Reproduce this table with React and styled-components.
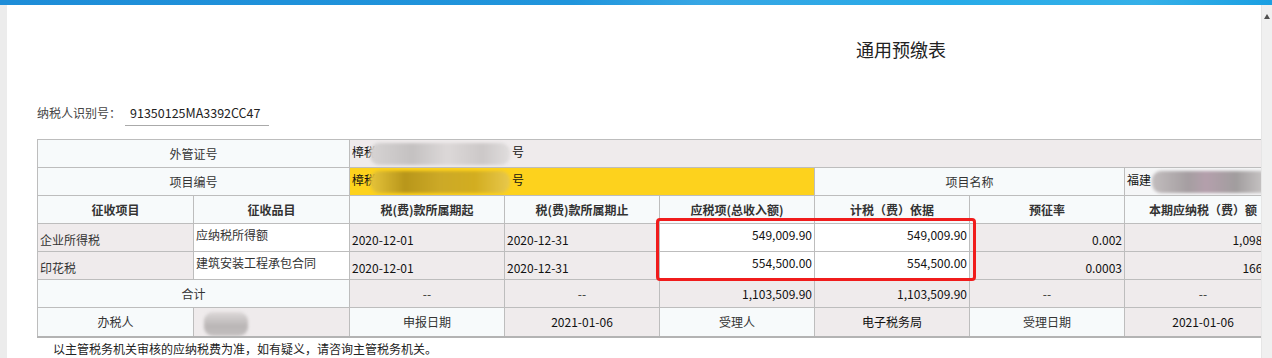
import React from "react";
import styled, { createGlobalStyle } from "styled-components";

const Global = createGlobalStyle`
  html, body {
    margin: 0;
    padding: 0;
    background: #fff;
  }
  body {
    font-family: "Noto Sans CJK SC", "Microsoft YaHei", sans-serif;
    font-size: 12px;
    color: #333;
  }
`;

const bgs = {
  label: "#f7fafb",
  value: "#efebec",
  white: "#ffffff",
  yellow: "#fdd21d",
  light: "#f5f6f7",
};

const rows = [
  ["企业所得税", "应纳税所得额", "2020-12-01", "2020-12-31", "549,009.90", "549,009.90", "0.002", "1,098.02"],
  ["印花税", "建筑安装工程承包合同", "2020-12-01", "2020-12-31", "554,500.00", "554,500.00", "0.0003", "166.35"],
];

const heads = [
  "征收项目",
  "征收品目",
  "税(费)款所属期起",
  "税(费)款所属期止",
  "应税项(总收入额)",
  "计税（费）依据",
  "预征率",
  "本期应纳税（费）额",
];

const App = () => {
  return (
    <Page>
      <Global />
      <TopBar />
      <Body>
        <LeftStrip />
        <Main>
          <Title>通用预缴表</Title>
          <IdRow>
            <span>纳税人识别号：</span>
            <IdValue>91350125MA3392CC47</IdValue>
          </IdRow>
          <TableWrap>
            <Table>
              <colgroup>
                <col style={{ width: 156 }} />
                <col style={{ width: 156 }} />
                <col style={{ width: 155 }} />
                <col style={{ width: 155 }} />
                <col style={{ width: 155 }} />
                <col style={{ width: 155 }} />
                <col style={{ width: 155 }} />
                <col style={{ width: 157 }} />
              </colgroup>
              <tbody>
                <tr>
                  <Cell colSpan={2} $bg="label" $align="center">外管证号</Cell>
                  <Cell colSpan={6} $bg="value" $dark>
                    樟税<Blur $w={140} $tone="gray" $shift={-6} />号
                  </Cell>
                </tr>
                <tr>
                  <Cell colSpan={2} $bg="label" $align="center">项目编号</Cell>
                  <Cell colSpan={3} $bg="yellow" $dark>
                    樟税<Blur $w={140} $tone="yellow" $shift={-6} />号
                  </Cell>
                  <Cell colSpan={2} $bg="label" $align="center">项目名称</Cell>
                  <Cell $bg="light" $dark>
                    福建<Blur $w={120} $tone="pink" $shift={1} />
                  </Cell>
                </tr>
                <tr>
                  {heads.map((h) => (
                    <Cell key={h} $bg="label" $align="center" $bold>
                      {h}
                    </Cell>
                  ))}
                </tr>
                {rows.map((r) => (
                  <tr key={r[0]}>
                    <Cell $bg="value" $low>{r[0]}</Cell>
                    <Cell $bg="white" $high>{r[1]}</Cell>
                    <Cell $bg="value" $low $dark>{r[2]}</Cell>
                    <Cell $bg="value" $low $dark>{r[3]}</Cell>
                    <Cell $bg="white" $high $align="right" $dark>{r[4]}</Cell>
                    <Cell $bg="white" $high $align="right" $dark>{r[5]}</Cell>
                    <Cell $bg="value" $low $align="right" $dark>{r[6]}</Cell>
                    <Cell $bg="value" $low $align="right" $dark>{r[7]}</Cell>
                  </tr>
                ))}
                <tr>
                  <Cell colSpan={2} $bg="label" $align="center">合计</Cell>
                  <Cell $bg="value" $align="center">--</Cell>
                  <Cell $bg="value" $align="center">--</Cell>
                  <Cell $bg="value" $align="right" $dark>1,103,509.90</Cell>
                  <Cell $bg="value" $align="right" $dark>1,103,509.90</Cell>
                  <Cell $bg="value" $align="center">--</Cell>
                  <Cell $bg="value" $align="center">--</Cell>
                </tr>
                <tr>
                  <Cell $bg="label" $align="center">办税人</Cell>
                  <Cell $bg="value">
                    <Blur $w={44} $tone="dark" $shift={8} $tall />
                  </Cell>
                  <Cell $bg="label" $align="center">申报日期</Cell>
                  <Cell $bg="value" $align="center" $dark>2021-01-06</Cell>
                  <Cell $bg="label" $align="center">受理人</Cell>
                  <Cell $bg="value" $align="center" $dark>电子税务局</Cell>
                  <Cell $bg="label" $align="center">受理日期</Cell>
                  <Cell $bg="value" $align="center" $dark>2021-01-06</Cell>
                </tr>
              </tbody>
            </Table>
            <Highlight />
          </TableWrap>
          <Note>以主管税务机关审核的应纳税费为准，如有疑义，请咨询主管税务机关。</Note>
        </Main>
        <Scrollbar>
          <ArrowUp />
        </Scrollbar>
      </Body>
    </Page>
  );
};

export default App;

const Page = styled.div`
  width: 1272px;
  height: 358px;
  display: flex;
  flex-direction: column;
  overflow: hidden;
`;

const TopBar = styled.div`
  height: 5px;
  flex-shrink: 0;
  background: linear-gradient(
    90deg,
    #1e8dd8 0%,
    #2095dc 45%,
    #37a6e4 55%,
    #27abe8 75%,
    #35b0e8 90%,
    #1a9fe2 100%
  );
`;

const Body = styled.div`
  flex: 1;
  display: flex;
  min-height: 0;
`;

const LeftStrip = styled.div`
  width: 7px;
  flex-shrink: 0;
  background: #ececec;
`;

const Main = styled.div`
  flex: 1;
  min-width: 0;
  overflow: hidden;
  padding: 32px 0 0 30px;
`;

const Title = styled.div`
  padding-left: 819px;
  font-size: 18px;
  line-height: 24px;
  color: #222;
`;

const IdRow = styled.div`
  margin-top: 42px;
  display: flex;
  align-items: flex-start;
  line-height: 20px;
  color: #444;
`;

const IdValue = styled.span`
  margin-left: 4px;
  padding: 0 5px 2px;
  border-bottom: 1px solid #aaa;
  font-size: 12.5px;
  color: #222;
  width: 134px;
`;

const TableWrap = styled.div`
  position: relative;
  margin-top: 13px;
  width: 1244px;
`;

const Table = styled.table`
  width: 1244px;
  table-layout: fixed;
  border-collapse: collapse;
  border-bottom: 2px solid #b3b3b3;

  tr {
    height: 28px;
  }
`;

const Cell = styled.td`
  border: 1px solid #bdbdbd;
  background: ${(p) => bgs[p.$bg]};
  text-align: ${(p) => p.$align || "left"};
  font-weight: ${(p) => (p.$bold ? 700 : 400)};
  color: ${(p) => (p.$dark ? "#111" : "#333")};
  padding: ${(p) => (p.$low ? "4px 2px 0" : p.$high ? "0 2px 6px" : "0 2px")};
  line-height: 16px;
  vertical-align: middle;
  white-space: nowrap;
  overflow: hidden;
`;

const tones = {
  gray: "linear-gradient(90deg, #d6d3d3, #c4c1c1 30%, #dcd8d8 55%, #ccc8c8 80%, #e0dddd)",
  yellow: "linear-gradient(90deg, #e6c43a, #b8961a 25%, #cca927 50%, #d2ad20 75%, #e8c84c)",
  pink: "linear-gradient(90deg, #c2bdbe, #a59ea1 30%, #b49fac 45%, #a19d9e 70%, #d2cfcf)",
  dark: "linear-gradient(180deg, #dcd8d8, #b9b5b5 60%, #c4c0c0)",
};

const Blur = styled.span`
  display: inline-block;
  vertical-align: middle;
  width: ${(p) => p.$w}px;
  height: ${(p) => (p.$tall ? 24 : 22)}px;
  margin: ${(p) => (p.$tall ? "4px" : "0")} 2px 0 ${(p) => p.$shift}px;
  background: ${(p) => tones[p.$tone]};
  border-radius: 9px;
  filter: blur(1.5px);
`;

const Highlight = styled.div`
  position: absolute;
  left: 619px;
  top: 79px;
  width: 314px;
  height: 57px;
  border: 3px solid #f01c1c;
  border-radius: 4px;
  pointer-events: none;
`;

const Note = styled.div`
  margin-top: 2px;
  padding-left: 16px;
  line-height: 18px;
  color: #222;
`;

const Scrollbar = styled.div`
  width: 11px;
  flex-shrink: 0;
  background: #f0f0f0;
  border-left: 1px solid #e6e6e6;
  display: flex;
  justify-content: center;
  padding-top: 9px;
  box-sizing: border-box;
`;

const ArrowUp = styled.div`
  width: 0;
  height: 0;
  border-left: 3px solid transparent;
  border-right: 3px solid transparent;
  border-bottom: 5px solid #505050;
`;
